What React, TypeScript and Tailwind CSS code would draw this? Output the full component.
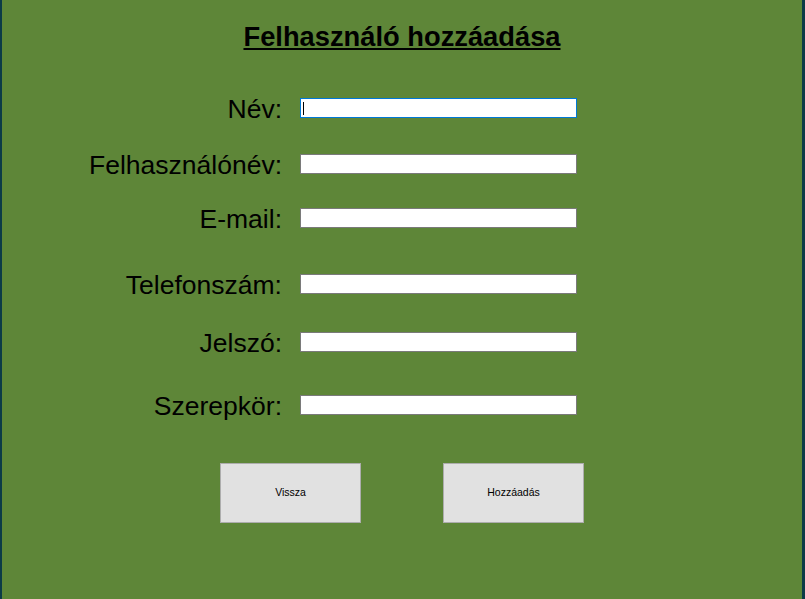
import React from "react";

const font = { fontFamily: '"Liberation Sans", Arial, sans-serif' };

function Row({ label, mt, focused }: { label: string; mt: string; focused?: boolean }) {
  return (
    <div className={`flex items-start ${mt}`}>
      <div className="ml-[79px] w-[201px] text-right text-[26.5px] leading-[22px] text-black whitespace-nowrap">
        {label}
      </div>
      <div
        className={`relative ml-[18px] w-[277px] h-[20px] bg-white border ${
          focused ? "border-[#0078d7]" : "border-[#7a7a7a]"
        }`}
      >
        {focused && <span className="absolute left-[2px] top-[3px] w-[1px] h-[13px] bg-black" />}
      </div>
    </div>
  );
}

export default function App() {
  return (
    <div className="flex w-[805px] h-[599px] overflow-hidden" style={font}>
      <div className="w-[2px] h-full bg-[#0c3b47]" />
      <div className="flex-1 h-full bg-[#5e8638] flex flex-col">
        <div className="pt-[21px] text-center">
          <span className="text-[27.3px] leading-[32px] font-bold underline text-black">
            Felhasználó hozzáadása
          </span>
        </div>
        <Row label="Név:" mt="mt-[45px]" focused />
        <Row label="Felhasználónév:" mt="mt-[34px]" />
        <Row label="E-mail:" mt="mt-[32px]" />
        <Row label="Telefonszám:" mt="mt-[44px]" />
        <Row label="Jelszó:" mt="mt-[36px]" />
        <Row label="Szerepkör:" mt="mt-[41px]" />
        <div className="flex mt-[46px] ml-[218px] gap-[82px]">
          <div className="w-[141px] h-[60px] bg-[#e1e1e1] border border-[#adadad] flex items-center justify-center text-[10.5px] text-black">
            Vissza
          </div>
          <div className="w-[141px] h-[60px] bg-[#e1e1e1] border border-[#adadad] flex items-center justify-center text-[10.5px] text-black">
            Hozzáadás
          </div>
        </div>
      </div>
      <div className="w-[3px] h-full bg-[#0c3b47]" />
    </div>
  );
}
